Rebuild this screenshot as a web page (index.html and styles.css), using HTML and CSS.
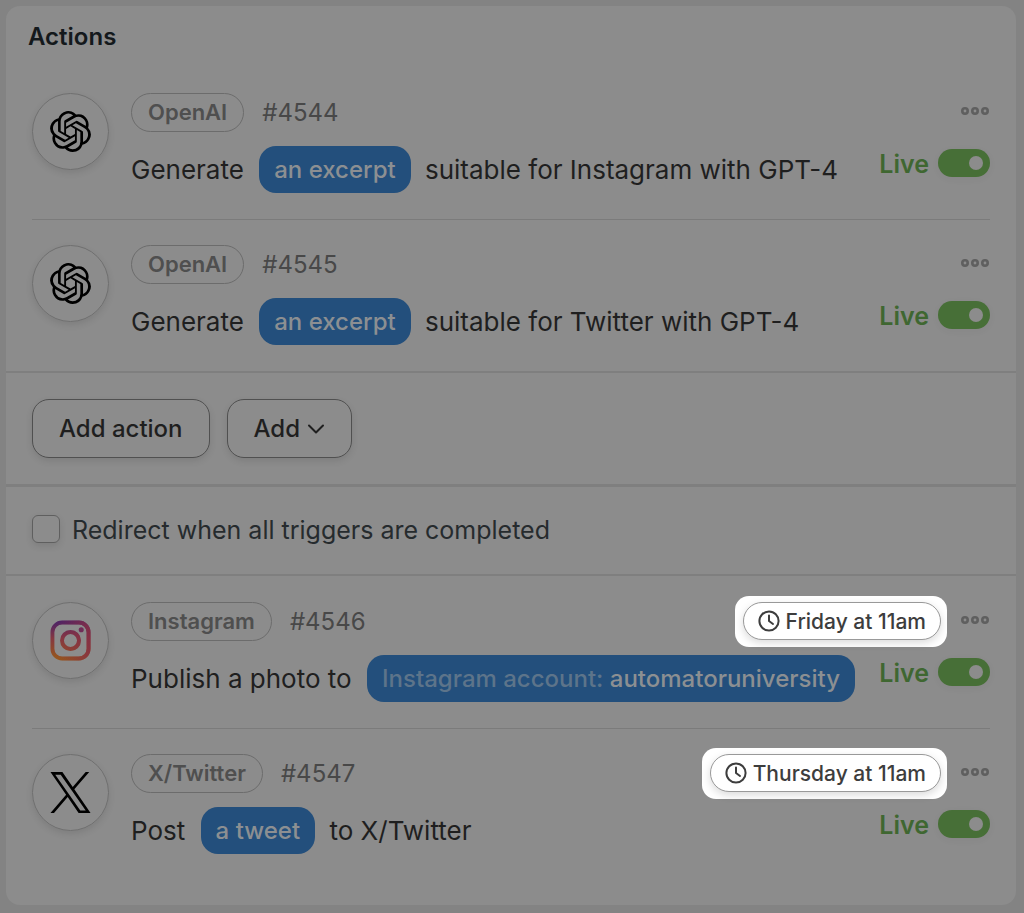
FILE: index.html
```html
<!DOCTYPE html>
<html lang="en">
<head>
    <meta charset="UTF-8">
    <title>Actions</title>
    <link rel="stylesheet" href="styles.css">
</head>
<body>

<!-- shared icons -->
<svg class="sprite" aria-hidden="true">
    <symbol id="openai" viewBox="0 0 24 24">
        <path d="M22.2819 9.8211a5.9847 5.9847 0 0 0-.5157-4.9108 6.0462 6.0462 0 0 0-6.5098-2.9A6.0651 6.0651 0 0 0 4.9807 4.1818a5.9847 5.9847 0 0 0-3.9977 2.9 6.0462 6.0462 0 0 0 .7427 7.0966 5.98 5.98 0 0 0 .511 4.9107 6.051 6.051 0 0 0 6.5146 2.9001A5.9847 5.9847 0 0 0 13.2599 24a6.0557 6.0557 0 0 0 5.7718-4.2058 5.9894 5.9894 0 0 0 3.9977-2.9001 6.0557 6.0557 0 0 0-.7475-7.0729zm-9.022 12.6081a4.4755 4.4755 0 0 1-2.8764-1.0408l.1419-.0804 4.7783-2.7582a.7948.7948 0 0 0 .3927-.6813v-6.7369l2.02 1.1686a.071.071 0 0 1 .038.052v5.5826a4.504 4.504 0 0 1-4.4945 4.4944zm-9.6607-4.1254a4.4708 4.4708 0 0 1-.5346-3.0137l.142.0852 4.783 2.7582a.7712.7712 0 0 0 .7806 0l5.8428-3.3685v2.3324a.0804.0804 0 0 1-.0332.0615L9.74 19.9502a4.4992 4.4992 0 0 1-6.1408-1.6464zM2.3408 7.8956a4.485 4.485 0 0 1 2.3655-1.9728V11.6a.7664.7664 0 0 0 .3879.6765l5.8144 3.3543-2.0201 1.1685a.0757.0757 0 0 1-.071 0l-4.8303-2.7865A4.504 4.504 0 0 1 2.3408 7.872zm16.5963 3.8558L13.1038 8.364 15.1192 7.2a.0757.0757 0 0 1 .071 0l4.8303 2.7913a4.4944 4.4944 0 0 1-.6765 8.1042v-5.6772a.79.79 0 0 0-.407-.667zm2.0107-3.0231l-.142-.0852-4.7735-2.7818a.7759.7759 0 0 0-.7854 0L9.409 9.2297V6.8974a.0662.0662 0 0 1 .0284-.0615l4.8303-2.7866a4.4992 4.4992 0 0 1 6.6802 4.66zM8.3065 12.863l-2.02-1.1638a.0804.0804 0 0 1-.038-.0567V6.0742a4.4992 4.4992 0 0 1 7.3757-3.4537l-.142.0805L8.704 5.459a.7948.7948 0 0 0-.3927.6813zm1.0976-2.3654l2.602-1.4998 2.6069 1.4998v2.9994l-2.5974 1.4997-2.6067-1.4997Z"/>
    </symbol>
    <symbol id="dots" viewBox="0 0 28 8">
        <g fill="none" stroke="#5f5f5f" stroke-width="2.6">
            <circle cx="4" cy="4" r="2.7"/>
            <circle cx="14" cy="4" r="2.7"/>
            <circle cx="24" cy="4" r="2.7"/>
        </g>
    </symbol>
    <symbol id="clock" viewBox="0 0 22 22">
        <g fill="none" stroke="#3d3d3d" stroke-width="2" stroke-linecap="round" stroke-linejoin="round">
            <circle cx="11" cy="11" r="9.6"/>
            <path d="M11 5.5V11l4 3"/>
        </g>
    </symbol>
</svg>

<main class="card">
    <h1>Actions</h1>

    <section class="rows">
        <div class="row">
            <div class="logo"><svg><use href="#openai"/></svg></div>
            <div class="body">
                <div class="meta">
                    <span class="tag">OpenAI</span>
                    <span class="number">#4544</span>
                    <button class="more" aria-label="More"><svg><use href="#dots"/></svg></button>
                </div>
                <div class="line">
                    <p>Generate <a class="chip" href="#">an excerpt</a> suitable for Instagram with GPT-4</p>
                    <label class="live">Live <input type="checkbox" checked></label>
                </div>
            </div>
        </div>
        <div class="row">
            <div class="logo"><svg><use href="#openai"/></svg></div>
            <div class="body">
                <div class="meta">
                    <span class="tag">OpenAI</span>
                    <span class="number">#4545</span>
                    <button class="more" aria-label="More"><svg><use href="#dots"/></svg></button>
                </div>
                <div class="line">
                    <p>Generate <a class="chip" href="#">an excerpt</a> suitable for Twitter with GPT-4</p>
                    <label class="live">Live <input type="checkbox" checked></label>
                </div>
            </div>
        </div>
    </section>

    <div class="buttons">
        <button class="btn">Add action</button>
        <button class="btn">Add
            <svg class="chevron" viewBox="0 0 18 10"><path d="M2 1.5l7 7 7-7"/></svg>
        </button>
    </div>

    <label class="redirect"><input type="checkbox"> Redirect when all triggers are completed</label>

    <section class="rows">
        <div class="row">
            <div class="logo">
                <svg viewBox="0 0 42 42">
                    <defs>
                        <linearGradient id="insta" gradientUnits="userSpaceOnUse" x1="0" y1="42" x2="0" y2="0">
                            <stop offset="0.05" stop-color="#96581c"/>
                            <stop offset="0.55" stop-color="#863841"/>
                            <stop offset="0.95" stop-color="#4d2366"/>
                        </linearGradient>
                        <linearGradient id="insta-pink" gradientUnits="userSpaceOnUse" x1="6" y1="0" x2="42" y2="0">
                            <stop offset="0" stop-color="#862f45" stop-opacity="0"/>
                            <stop offset="1" stop-color="#862f45" stop-opacity="0.85"/>
                        </linearGradient>
                        <g id="camera">
                            <rect x="2.5" y="2.5" width="37" height="37" rx="10"/>
                            <circle cx="21" cy="21" r="8.7"/>
                        </g>
                    </defs>
                    <use href="#camera" fill="none" stroke="url(#insta)" stroke-width="4"/>
                    <use href="#camera" fill="none" stroke="url(#insta-pink)" stroke-width="4"/>
                    <circle cx="32" cy="10" r="2.6" fill="#702c57"/>
                </svg>
            </div>
            <div class="body">
                <div class="meta">
                    <span class="tag">Instagram</span>
                    <span class="number">#4546</span>
                    <div class="spotlight">
                        <button class="time"><svg><use href="#clock"/></svg>Friday at 11am</button>
                    </div>
                    <button class="more" aria-label="More"><svg><use href="#dots"/></svg></button>
                </div>
                <div class="line">
                    <p>Publish a photo to <a class="chip" href="#"><span>Instagram account:</span> automatoruniversity</a></p>
                    <label class="live">Live <input type="checkbox" checked></label>
                </div>
            </div>
        </div>
        <div class="row">
            <div class="logo">
                <svg viewBox="0 0 1200 1227">
                    <path d="M714.163 519.284L1160.89 0H1055.03L667.137 450.887L357.328 0H0L468.492 681.821L0 1226.37H105.866L515.491 750.218L842.672 1226.37H1200L714.137 519.284H714.163ZM569.165 687.828L521.697 619.934L144.011 79.6944H306.615L611.412 515.685L658.88 583.579L1055.08 1150.3H892.476L569.165 687.854V687.828Z"/>
                </svg>
            </div>
            <div class="body">
                <div class="meta">
                    <span class="tag">X/Twitter</span>
                    <span class="number">#4547</span>
                    <div class="spotlight">
                        <button class="time"><svg><use href="#clock"/></svg>Thursday at 11am</button>
                    </div>
                    <button class="more" aria-label="More"><svg><use href="#dots"/></svg></button>
                </div>
                <div class="line">
                    <p>Post <a class="chip" href="#">a tweet</a> to X/Twitter</p>
                    <label class="live">Live <input type="checkbox" checked></label>
                </div>
            </div>
        </div>
    </section>
</main>

</body>
</html>
```
FILE: styles.css
```css
* {
    box-sizing: border-box;
}

body {
    margin: 0;
    padding: 6px 8px 8px 6px;
    background: #838383;
    color: #1f1f1f;
    font-family: Inter, "Liberation Sans", sans-serif;
}

.sprite {
    display: none;
}

button {
    font-family: inherit;
    cursor: pointer;
}

.card {
    padding-bottom: 25px;
    background: #8c8c8c;
    border-radius: 14px;
}

h1 {
    margin: 0;
    padding: 16px 22px 15px;
    font-size: 24px;
    font-weight: 600;
    line-height: 30px;
    color: #14191c;
}

.rows {
    padding: 0 26px;
}

.row {
    display: flex;
    gap: 22px;
    padding: 26px 0;
}

.row + .row {
    padding-top: 25px;
    border-top: 1px solid #7b7b7b;
}

.logo {
    display: flex;
    flex: none;
    align-items: center;
    justify-content: center;
    width: 77px;
    height: 77px;
    border: 1px solid #6f6f6f;
    border-radius: 50%;
    box-shadow: 0 3px 7px rgba(0, 0, 0, 0.1);
}

.logo svg {
    width: 41px;
    height: 41px;
}

.body {
    flex: 1;
    min-width: 0;
}

.meta {
    display: flex;
    align-items: center;
    height: 39px;
    margin-bottom: 14px;
}

.tag {
    padding: 0 16px;
    border: 1px solid #6c6c6c;
    border-radius: 20px;
    font-size: 22px;
    font-weight: 600;
    line-height: 37px;
    color: #4f4f4f;
}

.number {
    margin-left: 18px;
    font-size: 24px;
    color: #484848;
}

.more {
    display: flex;
    margin-left: auto;
    padding: 0 1px 3px;
    border: 0;
    background: none;
}

.more svg {
    width: 28px;
    height: 8px;
}

.spotlight {
    margin-left: auto;
    padding: 6px 6px 7px 8px;
    border-radius: 14px;
    background: #fff;
}

.spotlight + .more {
    margin-left: 13px;
}

.time {
    display: flex;
    align-items: center;
    gap: 6px;
    height: 38px;
    padding: 0 14px;
    border: 1px solid #999;
    border-radius: 19px;
    background: #fff;
    box-shadow: 0 3px 8px rgba(0, 0, 0, 0.15);
    font-size: 21px;
    font-weight: 500;
    color: #3d3d3d;
}

.time svg {
    width: 22px;
    height: 22px;
}

.line {
    display: flex;
    align-items: flex-start;
    justify-content: space-between;
}

.line p {
    margin: 0;
    font-size: 26px;
    line-height: 47px;
    white-space: nowrap;
}

.chip {
    display: inline-block;
    margin: 0 7px 0 8px;
    padding: 0 15px;
    border-radius: 17px;
    background: #234f7c;
    color: #8c8f92;
    font-size: 24px;
    font-weight: 500;
    text-decoration: none;
    vertical-align: top;
}

.chip span {
    color: #5d748a;
}

.live {
    display: flex;
    align-items: center;
    gap: 9px;
    margin-top: 3px;
    font-size: 25px;
    font-weight: 600;
    line-height: 30px;
    color: #3f6731;
}

.live input {
    appearance: none;
    width: 52px;
    height: 28px;
    margin: 0 0 2px;
    padding: 7px;
    border-radius: 14px;
    background: #476f37;
    box-shadow: 0 2px 8px rgba(0, 0, 0, 0.04);
}

.live input::before {
    content: "";
    display: block;
    width: 14px;
    height: 14px;
    margin-left: auto;
    border-radius: 50%;
    background: #8c8c8c;
}

.buttons {
    display: flex;
    gap: 17px;
    padding: 26px;
    border-top: 2px solid #7f7f7f;
    border-bottom: 3px solid #7f7f7f;
}

.btn {
    display: flex;
    align-items: center;
    gap: 7px;
    height: 59px;
    padding: 0 26px;
    border: 1px solid #505050;
    border-radius: 17px;
    background: #8c8c8c;
    box-shadow: 0 3px 7px rgba(0, 0, 0, 0.1);
    font-size: 24px;
    font-weight: 500;
    color: #1f1f1f;
}

.chevron {
    width: 18px;
    height: 10px;
    fill: none;
    stroke: #1f1f1f;
    stroke-width: 2;
    stroke-linecap: round;
    stroke-linejoin: round;
}

.redirect {
    display: flex;
    align-items: center;
    gap: 12px;
    padding: 26px;
    border-bottom: 2px solid #7f7f7f;
    font-size: 25px;
    line-height: 35px;
    color: #262b2e;
}

.redirect input {
    appearance: none;
    width: 28px;
    height: 28px;
    margin: 0 0 3px;
    border: 1px solid #5f5f5f;
    border-radius: 6px;
    box-shadow: 0 3px 7px rgba(0, 0, 0, 0.1);
}
```
